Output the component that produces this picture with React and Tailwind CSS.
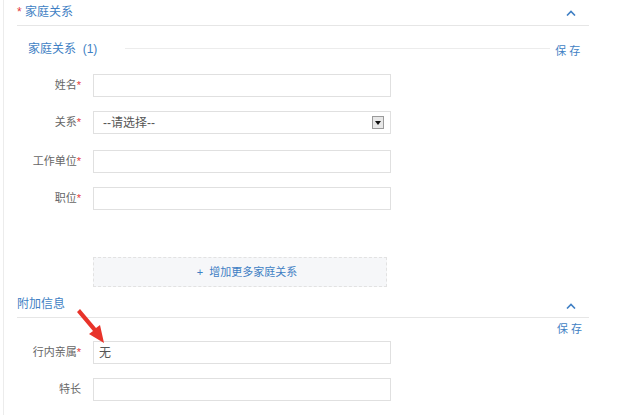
import React from 'react';

const font = { fontFamily: '"Liberation Sans", "Noto Sans CJK SC", sans-serif' };

function Chevron() {
  return (
    <svg width="10" height="6" viewBox="0 0 10 6" className="block">
      <path d="M1 5.5 L5 1.5 L9 5.5" fill="none" stroke="#3f7fc4" strokeWidth="1.6" />
    </svg>
  );
}

function Field({ label, required, value, select, className = '' }) {
  return (
    <div className={`flex items-center h-[23px] ${className}`}>
      <div className="w-[64px] text-right text-[11px] text-[#666] leading-none">
        {label}
        {required && <span className="text-[#e4393c]">*</span>}
      </div>
      <div className={`ml-[12px] w-[298px] h-[23px] border border-[#e0e0e0] bg-white flex items-center pr-[9px] text-[12px] text-[#555] ${select ? 'pl-[9px]' : 'pl-[5px]'}`}>
        <span className="flex-1">{value}</span>
        {select && (
          <span className="w-[12px] h-[13px] border border-[#9a9a9a] bg-[#e8e8e8] flex items-center justify-center -mr-[3px]">
            <svg width="6" height="4" viewBox="0 0 6 4"><path d="M0 0 H6 L3 4 Z" fill="#111" /></svg>
          </span>
        )}
      </div>
    </div>
  );
}

export default function App() {
  return (
    <div className="relative w-[618px] h-[415px] bg-white overflow-hidden" style={font}>
      <div className="ml-[3px] h-full border-l border-[#ececec] pl-[13px] w-[586px]">
        <div className="h-[26px] flex items-center justify-between border-b border-[#e6e6e6] pr-[13px]">
          <span className="text-[12px] text-[#3f7fc4] -mt-[2px]">
            <span className="text-[#e4393c]">*</span> 家庭关系
          </span>
          <Chevron />
        </div>

        <div className="mt-[14px] h-[18px] flex items-center">
          <span className="ml-[11px] text-[12px] text-[#3f7fc4] whitespace-pre">家庭关系  (1)</span>
          <div className="ml-[28px] w-[425px] border-t border-[#ececec] -mt-[2px]" />
          <span className="ml-[5px] mt-[4px] text-[11px] text-[#3f7fc4] tracking-[3px]">保存</span>
        </div>

        <Field label="姓名" required className="mt-[16px]" />
        <Field label="关系" required value="--请选择--" select className="mt-[14px]" />
        <Field label="工作单位" required className="mt-[16px]" />
        <Field label="职位" required className="mt-[14px]" />

        <div className="ml-[76px] mt-[47px] w-[294px] h-[30px] bg-[#f6f7f9] border border-dashed border-[#e2e2e2] flex items-center justify-center text-[11px] text-[#3f7fc4] pl-[14px]">
          +&nbsp;&nbsp;增加更多家庭关系
        </div>

        <div className="mt-[7px] h-[24px] flex items-center justify-between border-b border-[#e6e6e6] pr-[13px]">
          <span className="text-[12px] text-[#3f7fc4] -mt-[3px]">附加信息</span>
          <Chevron />
        </div>
        <div className="flex justify-end pr-[4px] mt-[3px] h-[16px]">
          <span className="text-[11px] text-[#3f7fc4] tracking-[3px]">保存</span>
        </div>

        <Field label="行内亲属" required value="无" className="mt-[4px]" />
        <Field label="特长" className="mt-[14px]" />
      </div>

      <svg className="absolute left-0 top-0 pointer-events-none" width="618" height="415">
        <path d="M77 312 L80 309 L96 328 L100 325 L104 343 L89 334 L93 331 Z" fill="#e8332a" />
      </svg>
    </div>
  );
}
